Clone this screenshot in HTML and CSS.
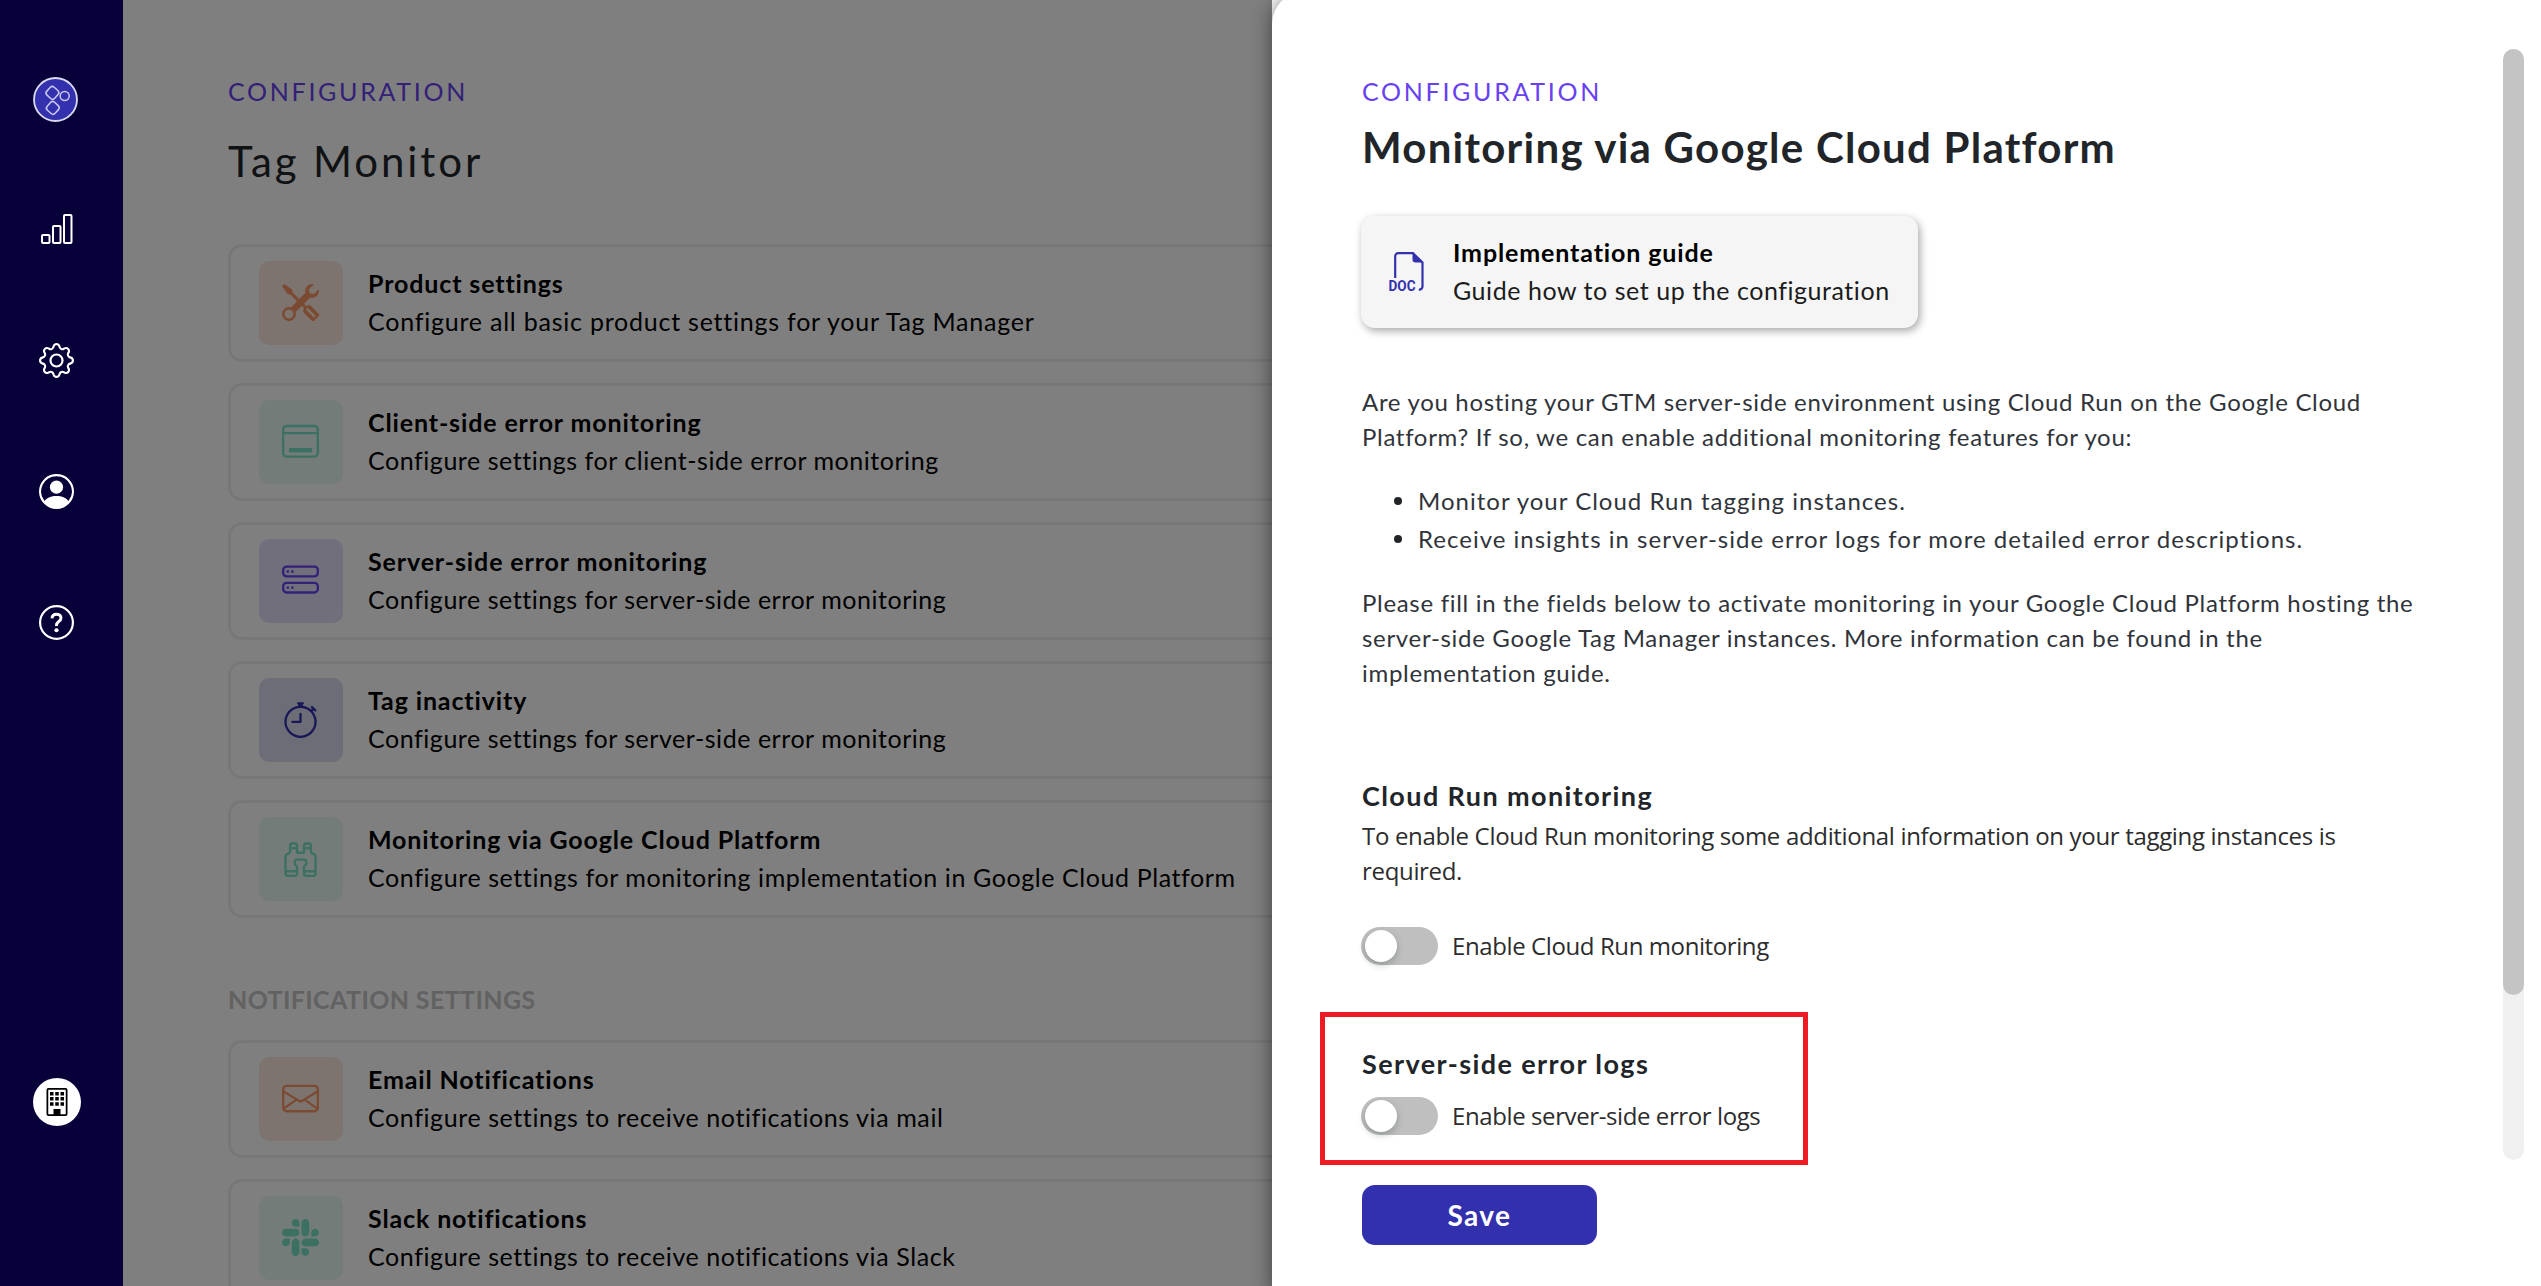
FILE: index.html
```html
<!DOCTYPE html>
<html lang="en">
<head>
<meta charset="utf-8">
<title>Tag Monitor</title>
<link rel="stylesheet" href="styles.css">
</head>
<body>
<div class="app">
  <nav class="sidebar">
    <svg class="logo" viewBox="0 0 44 44"><circle cx="22" cy="22" r="21" fill="#3331ad" stroke="#d9d9f2" stroke-width="1.8"/><g fill="none" stroke="#c9c8ee" stroke-width="1.5"><rect x="-5.2" y="-5.2" width="10.4" height="10.4" rx="2.8" transform="translate(19 15.5) rotate(42)"/><rect x="-5.2" y="-5.2" width="10.4" height="10.4" rx="2.8" transform="translate(19.4 30.2) rotate(42)"/><circle cx="31" cy="18.6" r="4.4"/></g></svg>
    <svg class="nav-icon" viewBox="0 0 35 35" fill="none" stroke="#fff" stroke-width="2"><rect x="3" y="23" width="7.5" height="8" rx="1"/><rect x="14" y="14" width="7.5" height="17" rx="1"/><rect x="25" y="3" width="7.5" height="28" rx="1"/></svg>
    <svg class="nav-icon" viewBox="0 0 16 16" fill="#fff"><path d="M8 4.754a3.246 3.246 0 1 0 0 6.492 3.246 3.246 0 0 0 0-6.492zM5.754 8a2.246 2.246 0 1 1 4.492 0 2.246 2.246 0 0 1-4.492 0z"/><path d="M9.796 1.343c-.527-1.79-3.065-1.79-3.592 0l-.094.319a.873.873 0 0 1-1.255.52l-.292-.16c-1.64-.892-3.433.902-2.54 2.541l.159.292a.873.873 0 0 1-.52 1.255l-.319.094c-1.79.527-1.79 3.065 0 3.592l.319.094a.873.873 0 0 1 .52 1.255l-.16.292c-.892 1.64.901 3.434 2.541 2.54l.292-.159a.873.873 0 0 1 1.255.52l.094.319c.527 1.79 3.065 1.79 3.592 0l.094-.319a.873.873 0 0 1 1.255-.52l.292.16c1.64.893 3.434-.902 2.54-2.541l-.159-.292a.873.873 0 0 1 .52-1.255l.319-.094c1.79-.527 1.79-3.065 0-3.592l-.319-.094a.873.873 0 0 1-.52-1.255l.16-.292c.893-1.64-.902-3.433-2.541-2.54l-.292.159a.873.873 0 0 1-1.255-.52l-.094-.319zm-2.633.283c.246-.835 1.428-.835 1.674 0l.094.319a1.873 1.873 0 0 0 2.693 1.115l.291-.16c.764-.415 1.6.42 1.184 1.185l-.159.292a1.873 1.873 0 0 0 1.116 2.692l.318.094c.835.246.835 1.428 0 1.674l-.319.094a1.873 1.873 0 0 0-1.115 2.693l.16.291c.415.764-.42 1.6-1.185 1.184l-.291-.159a1.873 1.873 0 0 0-2.693 1.116l-.094.318c-.246.835-1.428.835-1.674 0l-.094-.319a1.873 1.873 0 0 0-2.692-1.115l-.292.16c-.764.415-1.6-.42-1.184-1.185l.159-.291A1.873 1.873 0 0 0 1.945 8.93l-.319-.094c-.835-.246-.835-1.428 0-1.674l.319-.094A1.873 1.873 0 0 0 3.06 4.377l-.16-.292c-.415-.764.42-1.6 1.185-1.184l.292.159a1.873 1.873 0 0 0 2.692-1.115l.094-.319z"/></svg>
    <svg class="nav-icon" viewBox="0 0 16 16" fill="#fff"><path d="M11 6a3 3 0 1 1-6 0 3 3 0 0 1 6 0z"/><path fill-rule="evenodd" d="M0 8a8 8 0 1 1 16 0A8 8 0 0 1 0 8zm8-7a7 7 0 0 0-5.468 11.37C3.242 11.226 4.805 10 8 10s4.757 1.225 5.468 2.37A7 7 0 0 0 8 1z"/></svg>
    <svg class="nav-icon" viewBox="0 0 16 16" fill="none" stroke="#fff"><circle cx="8" cy="8" r="7.5"/><path stroke-width="1.35" d="M5.95 6.1C6 4.9 6.8 4.2 8 4.2c1.2 0 2.05.7 2.05 1.75 0 .8-.4 1.2-1.15 1.7-.7.5-.95.9-.95 1.9"/><circle cx="8" cy="11.55" r=".95" fill="#fff" stroke="none"/></svg>
    <div class="account">
      <svg viewBox="0 0 16 16" width="28" height="28"><rect x="2.5" y=".5" width="11" height="15" rx=".6" fill="none" stroke="#000"/><g fill="#000"><path d="M6 12h4v3.5H6z"/><path d="M4 2.3h2v2H4zM7 2.3h2v2H7zM10 2.3h2v2h-2zM4 5.2h2v2H4zM7 5.2h2v2H7zM10 5.2h2v2h-2zM4 8.1h2v2H4zM7 8.1h2v2H7zM10 8.1h2v2h-2z"/></g></svg>
    </div>
  </nav>

  <main class="main">
    <p class="eyebrow">CONFIGURATION</p>
    <h1 class="page-title">Tag Monitor</h1>
    <div class="cards">
      <div class="card">
        <div class="tile orange"><svg viewBox="0 0 16 16" fill="currentColor"><path fill-rule="evenodd" d="M1 0 0 1l2.2 3.081a1 1 0 0 0 .815.419h.07a1 1 0 0 1 .708.293l2.675 2.675-2.617 2.654A3.003 3.003 0 0 0 0 13a3 3 0 1 0 5.878-.851l2.654-2.617.968.968-.305.914a1 1 0 0 0 .242 1.023l3.27 3.27a.997.997 0 0 0 1.414 0l1.586-1.586a.997.997 0 0 0 0-1.414l-3.27-3.27a1 1 0 0 0-1.023-.242L10.5 9.5l-.96-.96 2.68-2.643A3.005 3.005 0 0 0 16 3c0-.269-.035-.53-.102-.777l-2.14 2.141L12 4l-.364-1.757L13.777.102a3 3 0 0 0-3.675 3.68L7.462 6.46 4.793 3.793a1 1 0 0 1-.293-.707v-.071a1 1 0 0 0-.419-.814L1 0Zm9.646 10.646a.5.5 0 0 1 .708 0l2.914 2.915a.5.5 0 0 1-.707.707l-2.915-2.914a.5.5 0 0 1 0-.708ZM3 11l.471.242.529.026.287.445.445.287.026.529L5 13l-.242.471-.026.529-.445.287-.287.445-.529.026L3 15l-.471-.242L2 14.732l-.287-.445L1.268 14l-.026-.529L1 13l.242-.471.026-.529.445-.287.287-.445.529-.026L3 11Z"/></svg></div>
        <div><h2 class="card-title">Product settings</h2><p class="card-text wide">Configure all basic product settings for your Tag Manager</p></div>
      </div>
      <div class="card">
        <div class="tile mint"><svg viewBox="0 0 16 16" fill="none" stroke="currentColor"><rect x=".5" y="1.3" width="15" height="13.2" rx="1.6"/><path d="M.5 4.4h15"/><path d="M3 10.8h10v1.9H3z" fill="currentColor" stroke="none"/></svg></div>
        <div><h2 class="card-title">Client-side error monitoring</h2><p class="card-text snug">Configure settings for client-side error monitoring</p></div>
      </div>
      <div class="card">
        <div class="tile violet"><svg viewBox="0 0 16 16" fill="none" stroke="currentColor"><rect x=".5" y="2" width="15" height="4.200" rx="1.5"/><rect x=".5" y="9" width="15" height="4.200" rx="1.5"/><path d="M2 4.100h1M4 4.100h1M2 11.100h1M4 11.100h1"/></svg></div>
        <div><h2 class="card-title">Server-side error monitoring</h2><p class="card-text snug">Configure settings for server-side error monitoring</p></div>
      </div>
      <div class="card">
        <div class="tile navy"><svg viewBox="0 0 16 16" fill="currentColor"><path d="M8.5 5.6a.5.5 0 1 0-1 0v2.9h-3a.5.5 0 0 0 0 1H8a.5.5 0 0 0 .5-.5V5.6z"/><path d="M6.5 1A.5.5 0 0 1 7 .5h2a.5.5 0 0 1 0 1v.57c1.36.196 2.594.78 3.584 1.64a.715.715 0 0 1 .012-.013l.354-.354-.354-.353a.5.5 0 0 1 .707-.708l1.414 1.415a.5.5 0 1 1-.707.707l-.353-.354-.354.354a.512.512 0 0 1-.013.012A7 7 0 1 1 7 2.071V1.5a.5.5 0 0 1-.5-.5zM8 3a6 6 0 1 0 .001 12A6 6 0 0 0 8 3z"/></svg></div>
        <div><h2 class="card-title">Tag inactivity</h2><p class="card-text snug">Configure settings for server-side error monitoring</p></div>
      </div>
      <div class="card">
        <div class="tile mint"><svg viewBox="0 0 16 16" fill="currentColor"><path d="M3 2.5A1.5 1.5 0 0 1 4.5 1h1A1.5 1.5 0 0 1 7 2.5V5h2V2.5A1.5 1.5 0 0 1 10.5 1h1A1.5 1.5 0 0 1 13 2.5v2.382a.5.5 0 0 0 .276.447l.895.447A1.5 1.5 0 0 1 15 7.118V14.5a1.5 1.5 0 0 1-1.5 1.5h-3A1.5 1.5 0 0 1 9 14.5v-3a.5.5 0 0 1 .146-.354l.854-.853V9.5a.5.5 0 0 0-.5-.5h-3a.5.5 0 0 0-.5.5v.793l.854.853A.5.5 0 0 1 7 11.5v3A1.5 1.5 0 0 1 5.5 16h-3A1.5 1.5 0 0 1 1 14.5V7.118a1.5 1.5 0 0 1 .83-1.342l.894-.447A.5.5 0 0 0 3 4.882V2.5zM4.5 2a.5.5 0 0 0-.5.5V3h2v-.5a.5.5 0 0 0-.5-.5h-1zM6 4H4v.882a1.5 1.5 0 0 1-.83 1.342l-.894.447A.5.5 0 0 0 2 7.118V13h4v-1.293l-.854-.853A.5.5 0 0 1 5 10.5v-1A1.5 1.5 0 0 1 6.5 8h3A1.5 1.5 0 0 1 11 9.5v1a.5.5 0 0 1-.146.354l-.854.853V13h4V7.118a.5.5 0 0 0-.276-.447l-.895-.447A1.5 1.5 0 0 1 12 4.882V4h-2v1.5a.5.5 0 0 1-.5.5h-3a.5.5 0 0 1-.5-.5V4zm4-1h2v-.5a.5.5 0 0 0-.5-.5h-1a.5.5 0 0 0-.5.5V3zm4 11h-4v.5a.5.5 0 0 0 .5.5h3a.5.5 0 0 0 .5-.5V14zm-8 0H2v.5a.5.5 0 0 0 .5.5h3a.5.5 0 0 0 .5-.5V14z"/></svg></div>
        <div><h2 class="card-title">Monitoring via Google Cloud Platform</h2><p class="card-text">Configure settings for monitoring implementation in Google Cloud Platform</p></div>
      </div>
    </div>
    <h3 class="group-title">NOTIFICATION SETTINGS</h3>
    <div class="cards">
      <div class="card">
        <div class="tile orange"><svg viewBox="0 0 16 16" fill="none" stroke="currentColor"><rect x=".5" y="2.5" width="15" height="11" rx="1.5"/><path d="M.5 4.900 8 9.400l7.500-4.500M.6 12.500l5.800-4.100M15.400 12.500 9.600 8.400"/></svg></div>
        <div><h2 class="card-title">Email Notifications</h2><p class="card-text">Configure settings to receive notifications via mail</p></div>
      </div>
      <div class="card">
        <div class="tile mint"><svg viewBox="0 0 16 16" fill="currentColor"><path d="M3.362 10.11c0 .926-.756 1.681-1.681 1.681S0 11.036 0 10.111C0 9.186.756 8.43 1.68 8.43h1.682v1.68zm.846 0c0-.924.756-1.68 1.681-1.68s1.681.756 1.681 1.68v4.21c0 .924-.756 1.68-1.68 1.68a1.685 1.685 0 0 1-1.682-1.68v-4.21zM5.89 3.362c-.926 0-1.682-.756-1.682-1.681S4.964 0 5.89 0s1.68.756 1.68 1.68v1.682H5.89zm0 .846c.924 0 1.68.756 1.68 1.681S6.814 7.57 5.89 7.57H1.68C.757 7.57 0 6.814 0 5.89c0-.926.756-1.682 1.68-1.682h4.21zm6.749 1.682c0-.926.755-1.682 1.68-1.682.925 0 1.681.756 1.681 1.681s-.756 1.681-1.68 1.681h-1.681V5.89zm-.848 0c0 .924-.755 1.68-1.68 1.68A1.685 1.685 0 0 1 8.43 5.89V1.68C8.43.757 9.186 0 10.11 0c.926 0 1.681.756 1.681 1.68v4.21zm-1.681 6.748c.926 0 1.682.756 1.682 1.681S11.036 16 10.11 16s-1.681-.756-1.681-1.68v-1.682h1.68zm0-.847c-.924 0-1.68-.755-1.68-1.68 0-.925.756-1.681 1.68-1.681h4.21c.924 0 1.68.756 1.68 1.68 0 .926-.756 1.681-1.68 1.681h-4.21z"/></svg></div>
        <div><h2 class="card-title">Slack notifications</h2><p class="card-text">Configure settings to receive notifications via Slack</p></div>
      </div>
    </div>
    <div class="backdrop"></div>
  </main>

  <aside class="panel">
    <div class="panel-body">
      <p class="eyebrow">CONFIGURATION</p>
      <h1 class="panel-title">Monitoring via Google Cloud Platform</h1>
      <a class="guide">
        <svg class="doc" viewBox="0 0 35 40"><path d="M6.200 26V4.500A3 3 0 0 1 9.200 1.200H24L33.500 10.500V34.500a3 3 0 0 1-3.700 3" fill="none" stroke="#3331ad" stroke-width="2.200"/><path d="M23.500 1v6.500a3 3 0 0 0 3 3H34z" fill="#3331ad"/><text x="-.5" y="38.600" textLength="27" lengthAdjust="spacingAndGlyphs">DOC</text></svg>
        <div><h2 class="card-title">Implementation guide</h2><p class="card-text">Guide how to set up the configuration</p></div>
      </a>
      <p class="copy intro">Are you hosting your GTM server-side environment using Cloud Run on the Google Cloud Platform? If so, we can enable additional monitoring features for you:</p>
      <ul class="features">
        <li>Monitor your Cloud Run tagging instances.</li>
        <li>Receive insights in server-side error logs for more detailed error descriptions.</li>
      </ul>
      <p class="copy">Please fill in the fields below to activate monitoring in your Google Cloud Platform hosting the server-side Google Tag Manager instances. More information can be found in the implementation guide.</p>
      <h3 class="section-title first">Cloud Run monitoring</h3>
      <p class="help">To enable Cloud Run monitoring some additional information on your tagging instances is required.</p>
      <label class="switch-row"><span class="switch"><span class="knob"></span></span>Enable Cloud Run monitoring</label>
      <section class="highlight">
        <h3 class="section-title">Server-side error logs</h3>
        <label class="switch-row"><span class="switch"><span class="knob"></span></span>Enable server-side error logs</label>
      </section>
      <button class="save" type="button">Save</button>
    </div>
    <div class="scrollbar"><div class="thumb"></div></div>
  </aside>
</div>
</body>
</html>
```
FILE: styles.css
```css
* { box-sizing: border-box; }
body { margin: 0; font-family: Lato, "Liberation Sans", sans-serif; color: #212529; overflow: hidden; }
h1, h2, h3, p, ul { margin: 0; padding: 0; }
.app { display: flex; width: 2541px; height: 1286px; overflow: hidden; background: #fff; }

.sidebar { flex: none; width: 123px; background: #080038; display: flex; flex-direction: column; align-items: flex-start; padding: 77px 0 160px 39px; }
.logo { width: 45px; height: 45px; margin-left: -6px; margin-bottom: 90px; }
.nav-icon { width: 35px; height: 35px; margin-bottom: 96px; }
.account { width: 48px; height: 48px; margin: auto 0 0 -6px; border-radius: 50%; background: #fff; display: flex; align-items: center; justify-content: center; }

.main { position: relative; flex: none; width: 1149px; height: 1286px; overflow: hidden; padding: 72px 0 0 105px; }
.backdrop { position: absolute; inset: 0; background: rgba(0, 0, 0, .5); }
.eyebrow { font-size: 25px; line-height: 38px; letter-spacing: 2.7px; color: #6741f0; white-space: nowrap; }
.page-title { margin: 26px 0 58px; font-size: 42px; line-height: 50px; font-weight: 400; letter-spacing: 2.9px; }
.cards { display: flex; flex-direction: column; gap: 21px; width: 1600px; }
.card { height: 118px; border: 3px solid #efefef; border-radius: 14px; display: flex; align-items: center; gap: 25px; padding: 0 28px; color: #000; }
.tile { flex: none; width: 84px; height: 84px; border-radius: 10px; display: flex; align-items: center; justify-content: center; }
.tile svg { width: 37px; height: 37px; margin: -1px 1px 0 0; }
.orange { background: #fde9de; color: #f79464; }
.mint { background: #e6f8f2; color: #76e0c6; }
.violet { background: #e4defb; color: #6741f0; }
.navy { background: #dadaf0; color: #3331ad; }
.card-title { font-size: 25px; line-height: 38px; font-weight: 700; letter-spacing: .87px; white-space: nowrap; margin-top: -2px; }
.card-text { font-size: 25px; line-height: 38px; letter-spacing: .59px; white-space: nowrap; }
.card-text.wide { letter-spacing: .77px; }
.card-text.snug { letter-spacing: .54px; }
.group-title { margin: 62px 0 22px; font-size: 25px; line-height: 38px; font-weight: 700; letter-spacing: .38px; color: #c4c4c4; }

.panel { position: relative; flex: none; width: 1269px; height: 1302px; margin-top: -8px; background: #fff; border-radius: 32px 0 0 0; box-shadow: 0 0 20px rgba(0, 0, 0, .5); display: flex; justify-content: space-between; padding: 80px 17px 0 90px; }
.panel-body { width: 1062px; }
.panel-title { margin: 12px 0 44px; font-size: 42px; line-height: 50px; font-weight: 700; letter-spacing: 1.25px; white-space: nowrap; }
.guide { display: flex; align-items: center; gap: 30px; width: 557px; height: 112px; margin-left: -1px; padding-left: 28px; border-radius: 14px; background: #f5f5f5; color: #000; box-shadow: 2px 3px 8px rgba(0, 0, 0, .35); }
.guide .card-text { letter-spacing: .55px; color: #1c1c1c; }
.doc { flex: none; width: 35px; height: 40px; margin-right: -1px; overflow: visible; }
.doc text { font: 700 14px Roboto, sans-serif; fill: #3331ad; }
.copy { font-size: 24px; line-height: 35px; letter-spacing: .69px; color: #30343a; }
.intro { margin-top: 56px; }
.features { margin: 28px 0 27px; padding-left: 56px; font-size: 24px; line-height: 38px; letter-spacing: 1.01px; white-space: nowrap; list-style: none; color: #30343a; }
.features li { display: flex; align-items: center; gap: 16px; margin-left: -24px; }
.features li::before { content: ""; width: 8px; height: 8px; border-radius: 50%; background: #212529; }
.section-title { font-size: 27px; line-height: 38px; font-weight: 700; letter-spacing: 1.4px; white-space: nowrap; }
.first { margin-top: 87px; }
.help { margin: 3px 0 39px; font: 400 24px/35px "Open Sans", sans-serif; letter-spacing: -.327px; color: #2c2c2c; }
.switch-row { display: flex; align-items: center; gap: 14px; height: 38px; margin-left: -1px; font: 400 24px/38px "Open Sans", sans-serif; letter-spacing: -.4px; white-space: nowrap; color: #2c2c2c; }
.switch { flex: none; width: 77px; height: 38px; border-radius: 19px; background: #bfbfbf; padding: 3px 4px; }
.knob { display: block; width: 32px; height: 32px; border-radius: 50%; background: #fff; box-shadow: 0 3px 7px rgba(0, 35, 11, .25); }
.highlight { width: 488px; height: 153px; margin: 47px 0 20px -42px; border: 5px solid #ed1c24; padding: 28px 0 0 37px; }
.highlight .switch-row { margin-top: 14px; }
.save { display: block; width: 235px; height: 60px; border: 0; border-radius: 13px; background: #3230ad; color: #fff; font: 700 28px/38px Lato, sans-serif; letter-spacing: 1.4px; padding: 0; }
.scrollbar { width: 21px; height: 1111px; margin-top: -23px; border-radius: 11px; background: #f0f0f0; }
.thumb { height: 946px; border-radius: 11px; background: #c4c4c4; }
```
